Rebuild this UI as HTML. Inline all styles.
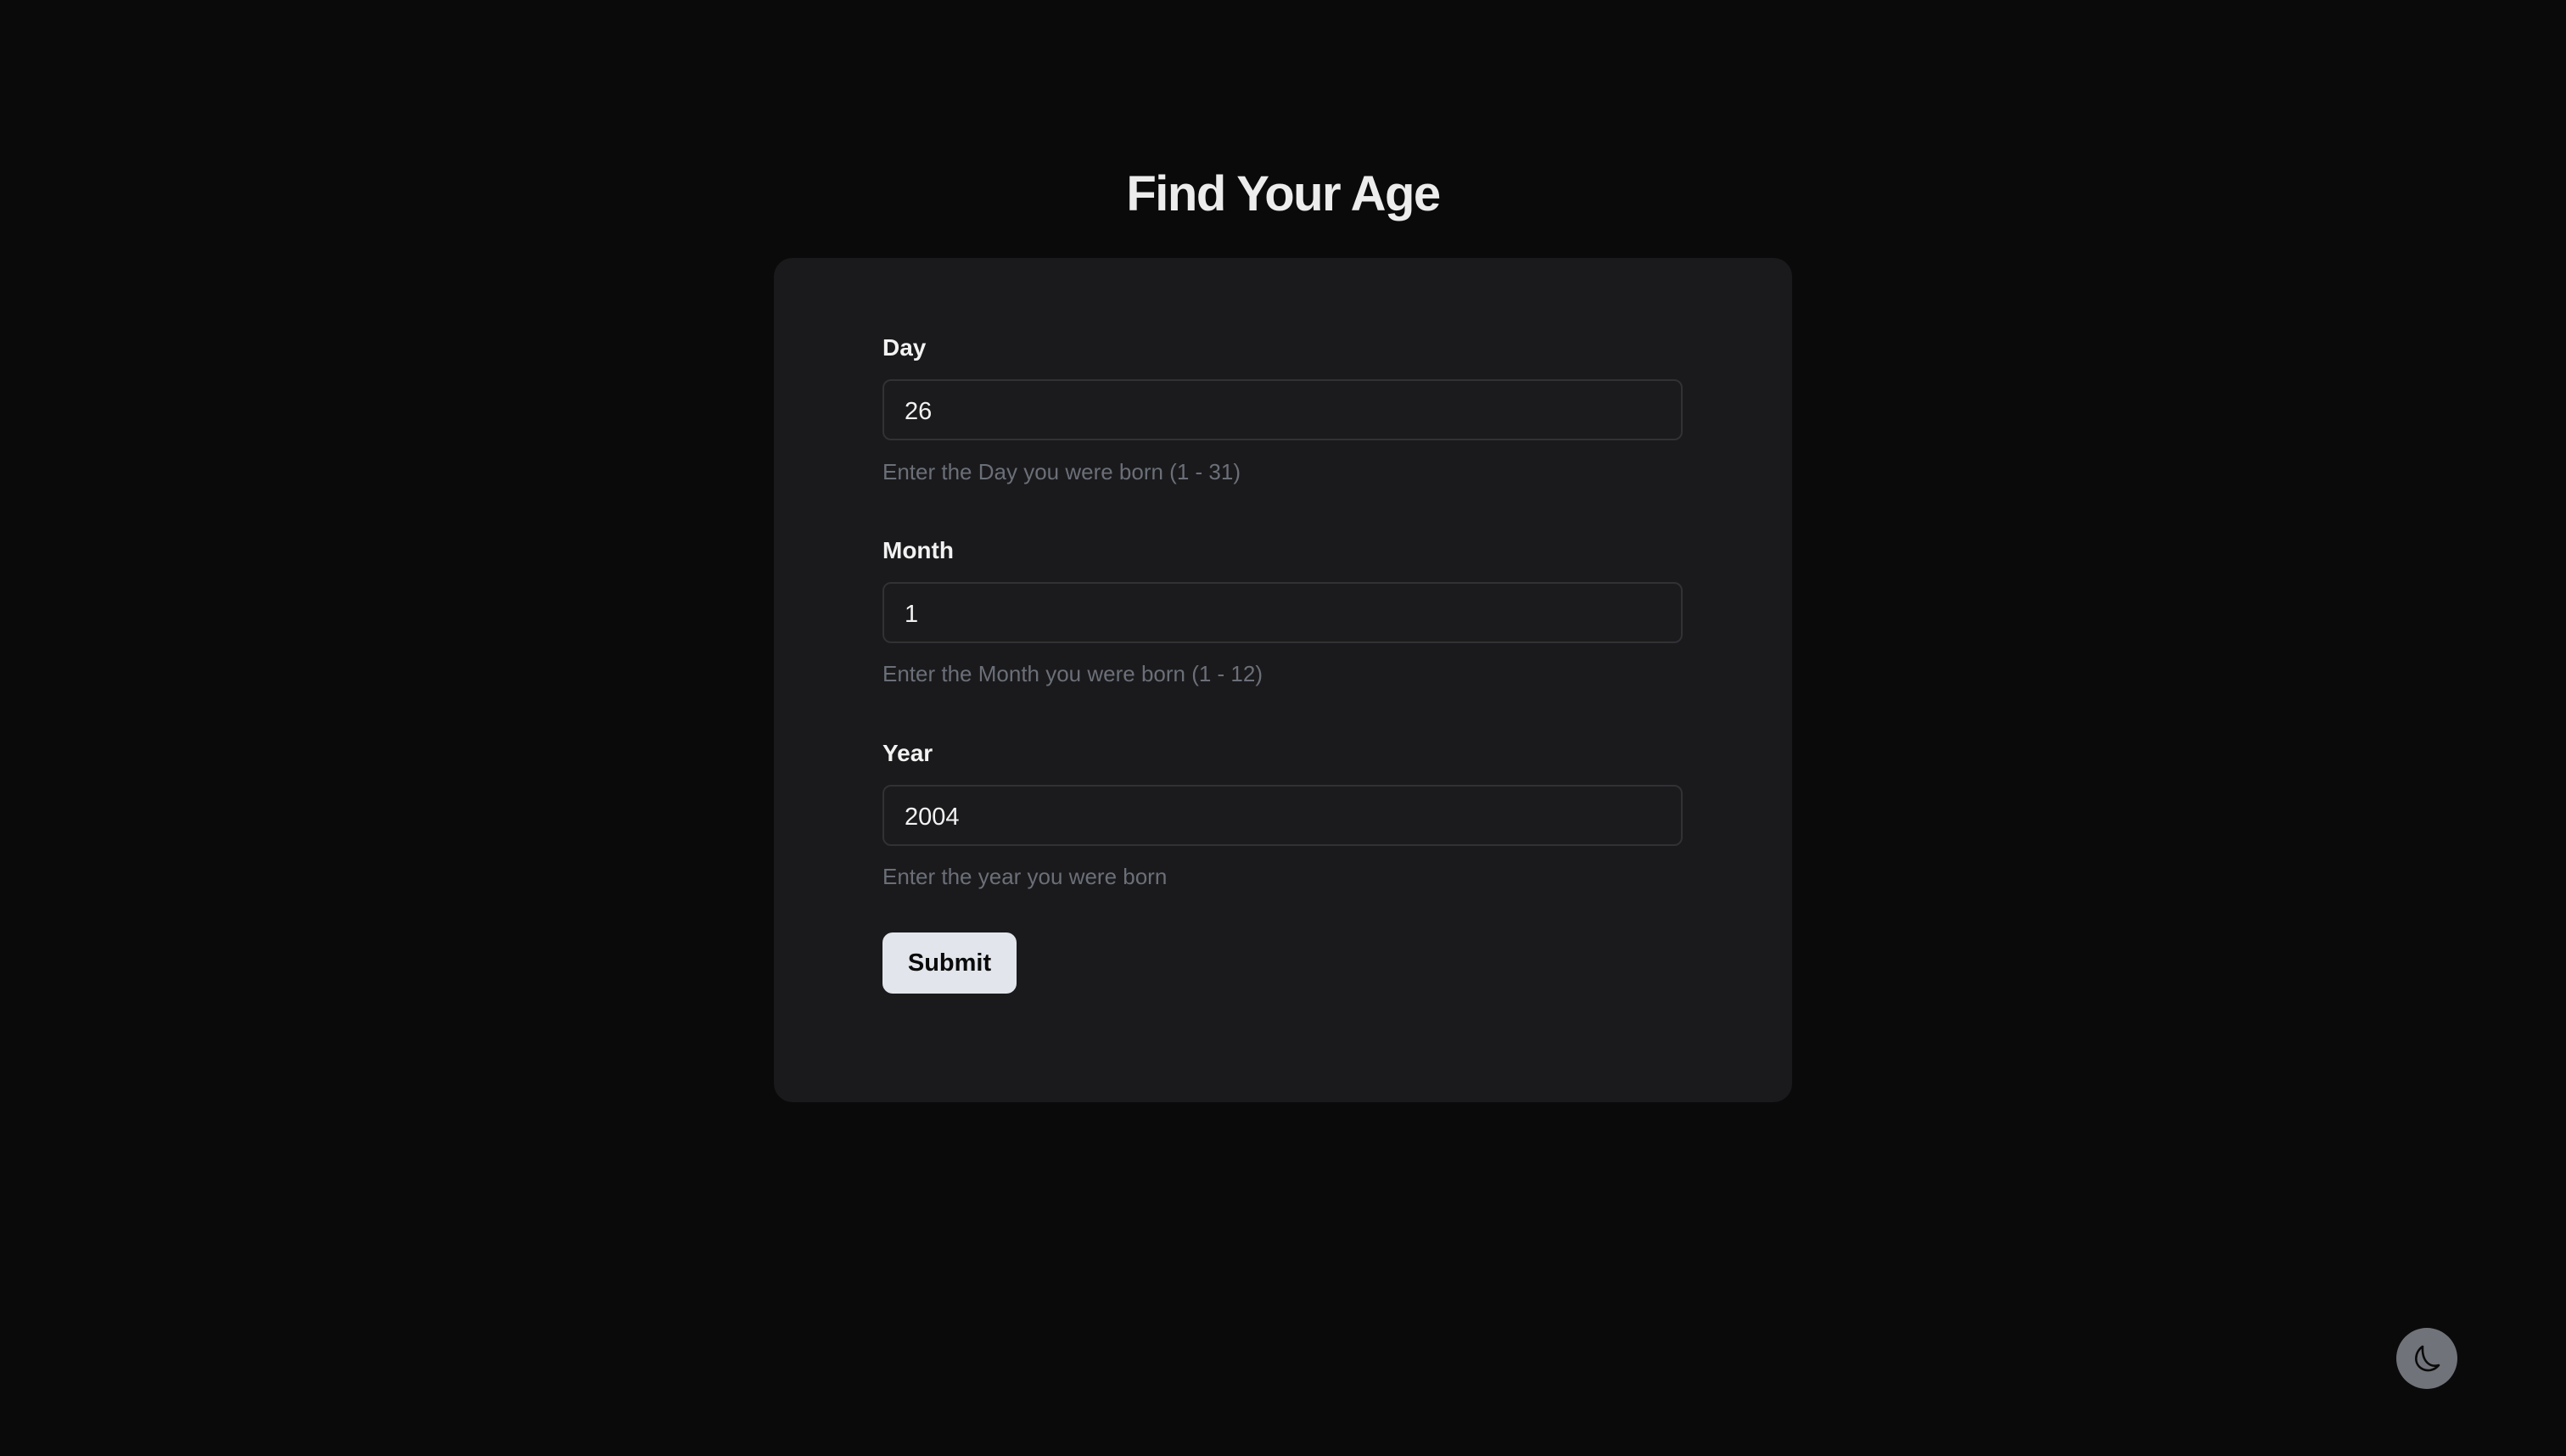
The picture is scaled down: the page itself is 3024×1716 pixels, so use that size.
<!DOCTYPE html>
<html><head><meta charset="utf-8"><style>
html,body{margin:0;padding:0;}
body{width:3024px;height:1716px;background:#0a0a0b;font-family:"Liberation Sans",sans-serif;position:relative;overflow:hidden;}
h1{position:absolute;left:0;width:3024px;top:189px;margin:0;text-align:center;font-size:58px;font-weight:700;color:#ececec;line-height:80px;letter-spacing:-1.5px;}
.card{position:absolute;left:912px;top:304px;width:1200px;height:995px;background:#1a1a1c;border-radius:22px;}
.lab{position:absolute;left:1040px;font-size:28px;font-weight:700;color:#f2f2f2;line-height:36px;-webkit-text-stroke:0;}
.inp{position:absolute;left:1040px;width:939px;height:68px;border:2px solid #313136;border-radius:10px;background:#1b1b1d;}
.inp span{position:absolute;left:24px;top:2px;line-height:68px;font-size:29px;color:#f2f2f2;}
.help{position:absolute;left:1040px;font-size:26px;color:#6b6f78;line-height:34px;}
.btn{position:absolute;left:1040px;top:1099px;width:158px;height:72px;background:#e2e5ec;border-radius:12px;text-align:center;line-height:72px;font-size:29px;font-weight:700;color:#0a0a0a;}
.moon{position:absolute;left:2824px;top:1565px;width:72px;height:72px;border-radius:50%;background:#71737a;}
</style></head><body>
<h1>Find Your Age</h1>
<div class="card"></div>
<div class="lab" style="top:392px">Day</div>
<div class="inp" style="top:447px"><span>26</span></div>
<div class="help" style="top:539px">Enter the Day you were born (1 - 31)</div>
<div class="lab" style="top:631px">Month</div>
<div class="inp" style="top:686px"><span>1</span></div>
<div class="help" style="top:777px">Enter the Month you were born (1 - 12)</div>
<div class="lab" style="top:870px">Year</div>
<div class="inp" style="top:925px"><span>2004</span></div>
<div class="help" style="top:1016px">Enter the year you were born</div>
<div class="btn">Submit</div>
<div class="moon"><svg width="72" height="72" viewBox="0 0 72 72"><path d="M31 22 C22 28 20 42 30 48 C37 52 45 50 50 44 C40 47 30 40 31 22 Z" fill="none" stroke="#0a0a0a" stroke-width="2.6" stroke-linejoin="round"/></svg></div>
</body></html>
